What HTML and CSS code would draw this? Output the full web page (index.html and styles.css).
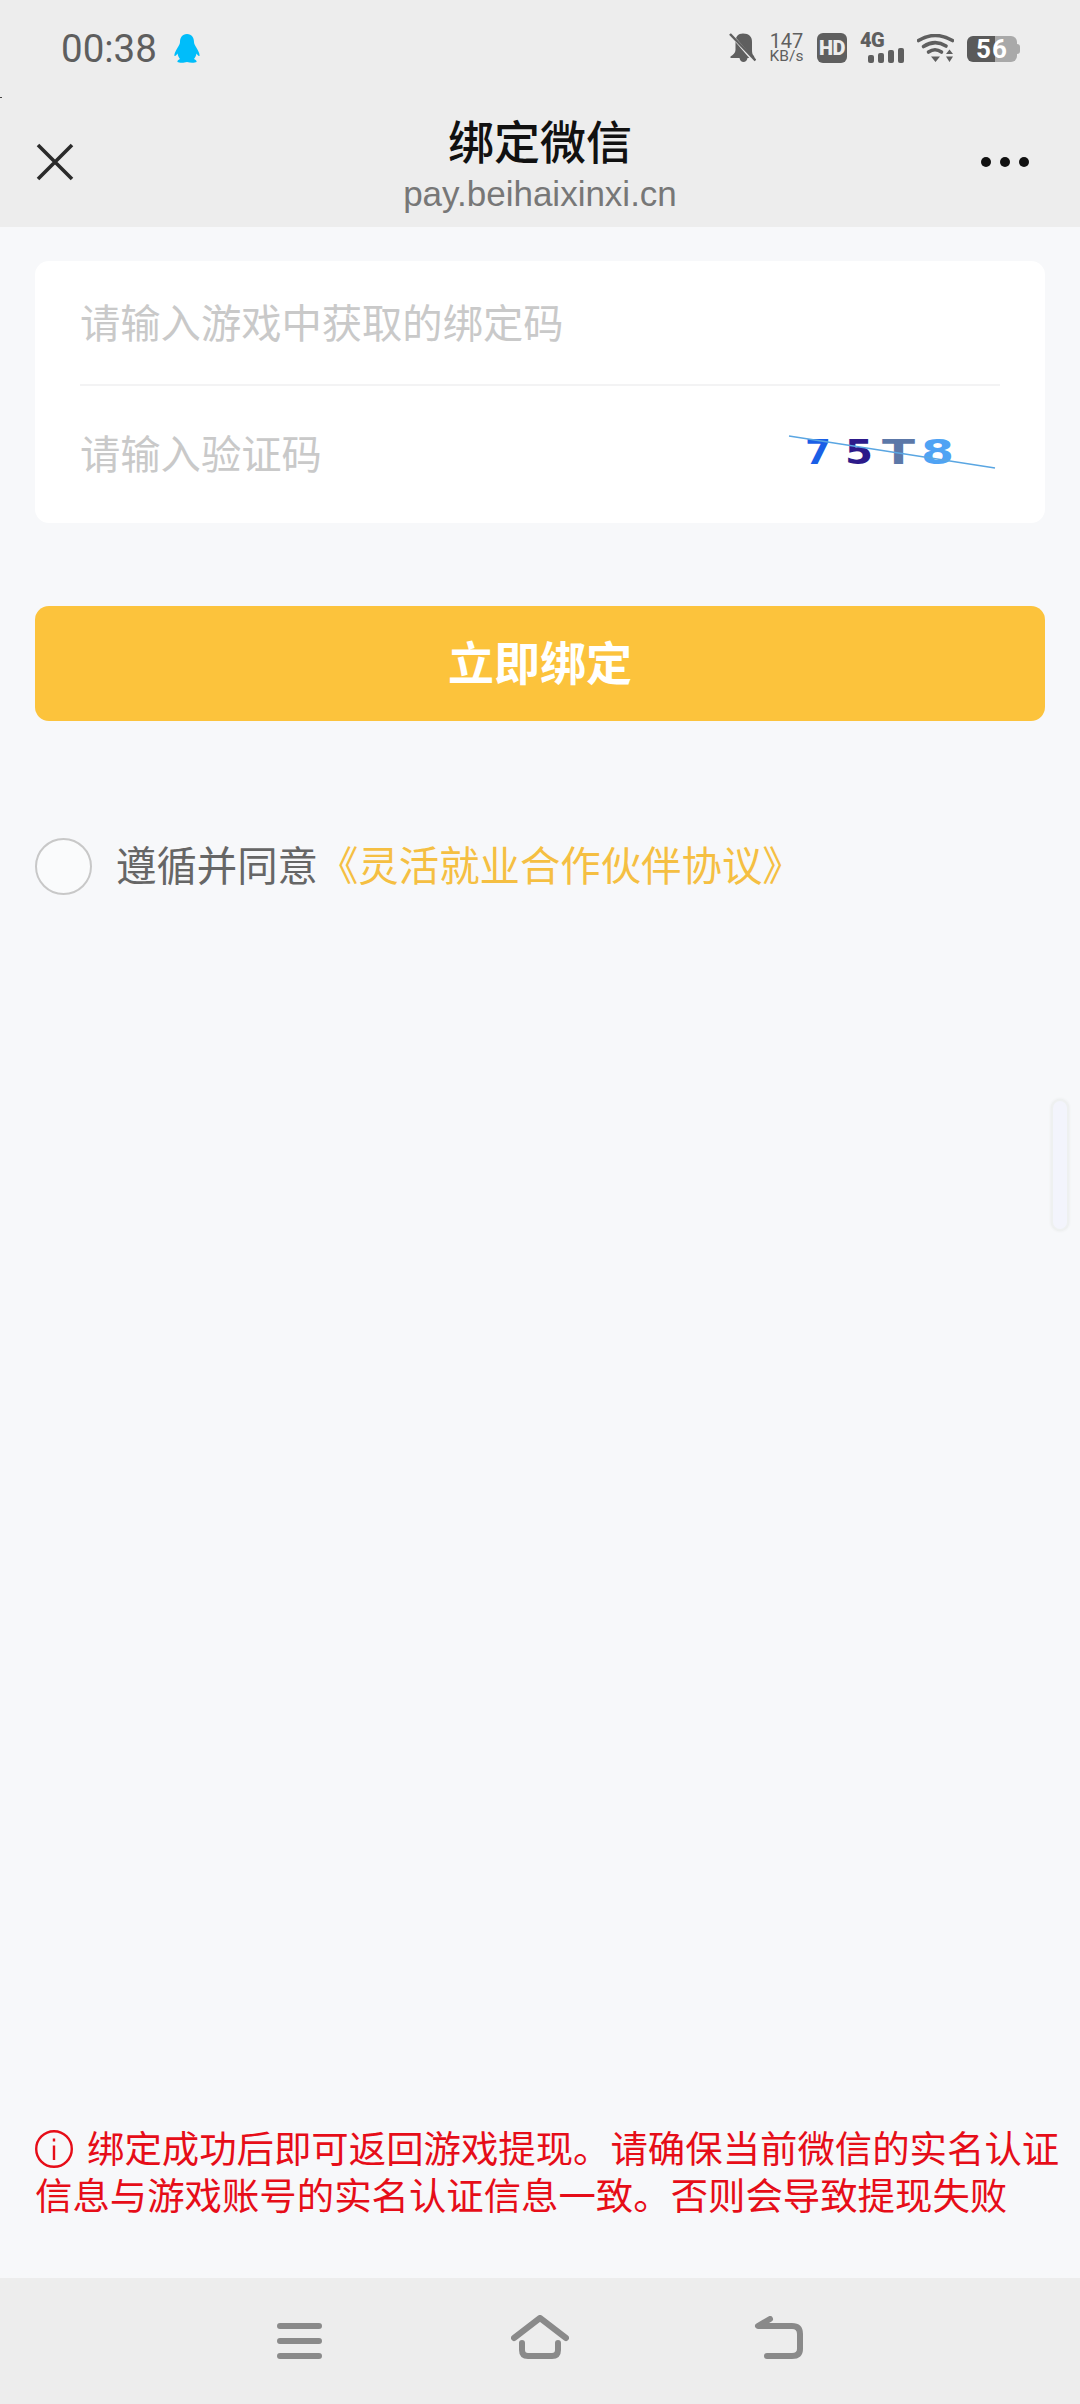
FILE: index.html
```html
<!DOCTYPE html>
<html lang="zh-CN">
<head>
<meta charset="utf-8">
<title>绑定微信</title>
<link rel="stylesheet" href="styles.css">
</head>
<body>
<div class="page">
  <header class="top">
    <i class="speck"></i>
    <div class="status">
      <div class="status-left">
        <span class="time">00:38</span>
        <svg class="qq" viewBox="0 0 26 29"><path d="M13 0C8 0 6 4 6 8C6 10 5 11 4 13C2 16 0 20 .5 22C1.5 22.5 3 20.5 3.5 19.5C4 22 5 24 6 25C4 26 3 27 3.5 28C5 29 10 29 13 28C16 29 21 29 22.5 28C23 27 22 26 20 25C21 24 22 22 22.5 19.5C23 20.5 24.5 22.5 25.5 22C26 20 24 16 22 13C21 11 20 10 20 8C20 4 18 0 13 0Z"/></svg>
      </div>
      <div class="status-right">
        <svg class="bell" viewBox="0 0 27 29">
          <path class="fill" d="M14 0.5C9 0.5 6.5 3.5 6.5 9V17C6.5 20 4 22 1.5 23.5V25H10.5C11 27.5 12.500 29 14.500 29C16.500 29 18 27.500 18.500 25H25.500L25 23C23.500 22 23 20 23 17V9C23 3.500 20 .5 14 .5Z"/>
          <path class="cut" d="M-1 -2L24 27"/>
          <path class="slash" d="M1 1L26.500 27.500"/>
        </svg>
        <div class="speed"><span class="speed-num">147</span><span class="speed-unit">KB/s</span></div>
        <div class="hd">HD</div>
        <div class="net">
          <span class="net-label">4G</span>
          <div class="bars"><i class="bar b1"></i><i class="bar b2"></i><i class="bar b3"></i><i class="bar b4"></i></div>
        </div>
        <svg class="wifi" viewBox="0 0 37 28">
          <path class="arc" d="M1.500 6.500Q18 -3.500 35.500 6.500"/>
          <path class="arc" d="M6.500 12.500Q18 5 29 12"/>
          <path class="arc" d="M11.500 18Q18 13.500 24.500 18"/>
          <path class="tri" d="M14 22.500H23L18.500 28ZM29 20L32.500 15.500L36 20ZM29 22.500H36L32.500 28Z"/>
        </svg>
        <div class="battery">56</div>
      </div>
    </div>
    <div class="nav">
      <svg class="close" viewBox="0 0 38 38"><path d="M2 2L36 36M36 2L2 36"/></svg>
      <div class="heading">
        <div class="title">绑定微信</div>
        <div class="domain">pay.beihaixinxi.cn</div>
      </div>
      <div class="more"><i></i><i></i><i></i></div>
    </div>
  </header>

  <main class="main">
    <section class="card">
      <div class="row row-code"><span class="ph">请输入游戏中获取的绑定码</span></div>
      <div class="row row-verify">
        <span class="ph">请输入验证码</span>
        <svg class="captcha" viewBox="0 0 206 36">
          <text class="c7" x="16" y="31" textLength="26" lengthAdjust="spacingAndGlyphs">7</text>
          <text class="c5" x="56" y="31" textLength="28" lengthAdjust="spacingAndGlyphs">5</text>
          <text class="cT" x="93" y="31" textLength="33" lengthAdjust="spacingAndGlyphs">T</text>
          <text class="c8" x="132" y="31" textLength="33" lengthAdjust="spacingAndGlyphs">8</text>
          <path class="cline" d="M0 3L206 35"/>
        </svg>
      </div>
    </section>
    <button class="submit">立即绑定</button>
    <div class="agree">
      <span class="radio"></span>
      <span class="agree-text">遵循并同意<span class="link">《灵活就业合作伙伴协议》</span></span>
    </div>
    <p class="notice"><svg class="info" viewBox="0 0 38 38"><circle cx="19" cy="19" r="17.800"/><path d="M19 15.500V30M19 8.500V11.500"/></svg>绑定成功后即可返回游戏提现。请确保当前微信的实名认证信息与游戏账号的实名认证信息一致。否则会导致提现失败</p>
    <div class="scroll-thumb"></div>
  </main>

  <footer class="bottom">
    <svg class="nav-ico menu" viewBox="0 0 45 36"><path d="M3 3H42M3 18H42M3 33H42"/></svg>
    <svg class="nav-ico home" viewBox="0 0 58 44"><path d="M3 23L29 3L55 23M11 28V35Q11 41 17 41H41Q47 41 47 35V28"/></svg>
    <svg class="nav-ico back" viewBox="0 0 50 44"><path d="M16 3L4 10H38Q46 10 46 18V33Q46 40 38 40H13"/></svg>
  </footer>
</div>
</body>
</html>
```

FILE: styles.css
```css
* { box-sizing: border-box; }
html, body { margin: 0; padding: 0; }
body {
  font-family: "Noto Sans CJK SC", "Noto Sans", sans-serif;
  background: #f7f8fa;
}
.page {
  width: 1080px;
  height: 2404px;
  display: flex;
  flex-direction: column;
  overflow: hidden;
}

/* header */
.top {
  position: relative;
  height: 227px;
  background: #ededed;
  flex: none;
}
.speck {
  position: absolute;
  left: 0;
  top: 97px;
  width: 2px;
  height: 1px;
  background: #444;
}
.status {
  height: 97px;
  padding: 33px 63px 0 61px;
  display: flex;
  justify-content: space-between;
  align-items: flex-start;
}
.status-left { display: flex; align-items: center; height: 30px; gap: 17px; }
.time {
  font-family: Roboto, sans-serif;
  font-size: 38.500px;
  line-height: 32px;
  padding-top: 1px;
  color: #5e5e5e;
}
.qq { width: 26px; height: 29px; fill: #00bdfa; }
.status-right {
  display: flex;
  align-items: flex-start;
  gap: 13px;
  height: 30px;
  color: #5f5f5f;
  font-family: Roboto, sans-serif;
}
.bell { width: 27px; height: 29px; }
.bell .fill { fill: #5f5f5f; }
.bell .cut { stroke: #ededed; stroke-width: 3; fill: none; }
.bell .slash { stroke: #5f5f5f; stroke-width: 2.500; fill: none; }
.speed { width: 35px; display: flex; flex-direction: column; align-items: center; }
.speed-num { font-size: 20px; line-height: 17px; }
.speed-unit { font-size: 15.500px; line-height: 13px; }
.hd {
  width: 30px;
  height: 30px;
  border-radius: 6px;
  background: #5f5f5f;
  color: #ededed;
  font-weight: 900;
  font-size: 20px;
  line-height: 30px;
  text-align: center;
  letter-spacing: -.5px;
}
.net { width: 44px; height: 30px; display: flex; flex-direction: column; }
.net-label { font-size: 20px; font-weight: 900; line-height: 15px; letter-spacing: -.5px; }
.bars { display: flex; align-items: flex-end; justify-content: flex-end; gap: 4px; height: 15px; }
.bar { width: 6px; background: #5f5f5f; border-radius: 2px; }
.b1 { height: 8px; }
.b2 { height: 10px; }
.b3 { height: 13px; }
.b4 { height: 15px; }
.wifi { width: 37px; height: 28px; margin-top: 1px; }
.wifi .arc { fill: none; stroke: #5f5f5f; stroke-width: 3.600; stroke-linecap: round; }
.wifi .tri { fill: #5f5f5f; }
.battery {
  position: relative;
  width: 50px;
  height: 26px;
  margin-top: 3px;
  border-radius: 6px;
  background: linear-gradient(to right, #5a5a5a 56%, #a9a9a9 56%);
  color: #fff;
  font-weight: 700;
  font-size: 26px;
  line-height: 26px;
  text-align: center;
  letter-spacing: 1px;
}
.battery::after {
  content: "";
  position: absolute;
  right: -3px;
  top: 8px;
  width: 3px;
  height: 10px;
  border-radius: 0 3px 3px 0;
  background: #a9a9a9;
}
.nav {
  height: 130px;
  padding: 0 36px;
  display: grid;
  grid-template-columns: 1fr auto 1fr;
  align-items: center;
}
.close { width: 38px; height: 38px; fill: none; stroke: #2b2b2b; stroke-width: 3.600; }
.heading { text-align: center; margin-top: 10px; }
.title {
  font-size: 46px;
  line-height: 54px;
  font-weight: 500;
  color: #111;
}
.domain {
  font-family: "Liberation Sans", sans-serif;
  font-size: 35px;
  line-height: 56px;
  color: #777;
}
.more { display: flex; justify-content: flex-end; gap: 9px; margin-right: 15px; }
.more i { width: 10px; height: 10px; border-radius: 50%; background: #111; }

/* main */
.main {
  position: relative;
  flex: 1;
  display: flex;
  flex-direction: column;
  padding: 34px 0 0 35px;
  background: #f7f8fa;
}
.card {
  width: 1010px;
  height: 262px;
  padding: 0 45px;
  background: #fff;
  border-radius: 14px;
}
.row { display: flex; align-items: center; justify-content: space-between; }
.row-code { height: 125px; border-bottom: 2px solid #f3f3f4; padding-bottom: 4px; }
.row-verify { height: 137px; padding-bottom: 5px; }
.ph { font-size: 40.300px; line-height: 56px; color: #c9c9c9; }
.captcha { width: 206px; height: 36px; margin: 0 5px 2px 0; overflow: visible; }
.captcha text { font-family: "DejaVu Sans", sans-serif; font-weight: 700; font-size: 34px; }
.c7 { fill: #1a5fe6; }
.c5 { fill: #2d1a8a; }
.cT { fill: #5c78a8; }
.c8 { fill: #4fa3f4; }
.cline { stroke: #5aa6e2; stroke-width: 1.500; fill: none; }
.submit {
  display: block;
  width: 1010px;
  height: 115px;
  margin: 83px 0 0;
  padding: 0 0 8px;
  border: 0;
  border-radius: 14px;
  background: #fcc33c;
  color: #fff;
  font-family: inherit;
  font-size: 46px;
  font-weight: 700;
}
.agree { display: flex; align-items: center; gap: 24px; margin-top: 115px; }
.radio { width: 57px; height: 57px; border-radius: 50%; border: 2px solid #c8c8c8; background: #fafbfc; flex: none; }
.agree-text { font-size: 40.400px; line-height: 56px; color: #666; padding-bottom: 5px; }
.link { color: #f5bf42; }
.notice {
  margin: auto 0 0;
  padding: 0 15px 60px 0;
  font-size: 37.400px;
  line-height: 47px;
  color: #e60d18;
}
.info {
  width: 38px;
  height: 38px;
  margin-right: 14px;
  vertical-align: -5px;
  fill: none;
  stroke: #e60d18;
  stroke-width: 2.400;
}
.scroll-thumb {
  position: absolute;
  right: 11px;
  top: 872px;
  width: 18px;
  height: 132px;
  border-radius: 9px;
  background: #f3f4fc;
  border: 2px solid #eef0f0;
  box-shadow: 0 0 3px #e6e8e8;
}

/* system nav */
.bottom {
  position: relative;
  height: 126px;
  background: #ededed;
  flex: none;
}
.nav-ico { position: absolute; fill: none; stroke: #8a8a8a; stroke-width: 6; stroke-linecap: round; stroke-linejoin: round; }
.menu { left: 277px; top: 45px; width: 45px; height: 36px; }
.home { left: 511px; top: 37px; width: 58px; height: 44px; }
.back { left: 754px; top: 38px; width: 50px; height: 44px; }
```
